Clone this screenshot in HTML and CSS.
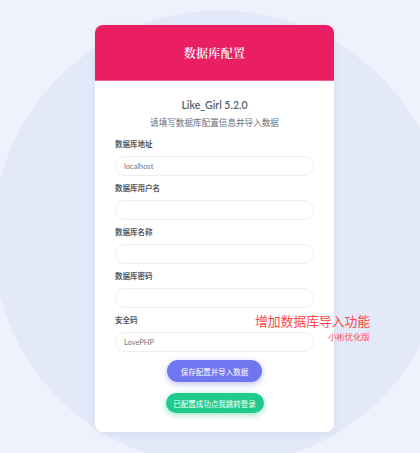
FILE: index.html
```
<!DOCTYPE html>
<html lang="zh-CN">
<head>
<meta charset="utf-8">
<title>数据库配置</title>
<link rel="stylesheet" href="styles.css">
</head>
<body>
<div class="card">
  <div class="card-head">数据库配置</div>
  <form class="card-body">
    <div class="app-name">Like_Girl 5.2.0</div>
    <div class="app-desc">请填写数据库配置信息并导入数据</div>
    <label class="field-label">数据库地址</label>
    <input class="field-input" type="text" placeholder="localhost">
    <label class="field-label">数据库用户名</label>
    <input class="field-input" type="text">
    <label class="field-label">数据库名称</label>
    <input class="field-input" type="text">
    <label class="field-label">数据库密码</label>
    <input class="field-input" type="password">
    <label class="field-label">安全码</label>
    <input class="field-input" type="text" placeholder="LovePHP">
    <div class="actions">
      <button type="button" class="btn btn-save">保存配置并导入数据</button>
      <button type="button" class="btn btn-login">已配置成功点我跳转登录</button>
    </div>
  </form>
</div>
<div class="note">
  <div class="note-main">增加数据库导入功能</div>
  <div class="note-sub">小彬优化版</div>
</div>
</body>
</html>
```
FILE: styles.css
```
html, body {
  margin: 0;
  padding: 0;
}
html {
  overflow: hidden;
}
body {
  width: 420px;
  height: 453px;
  overflow: hidden;
  position: relative;
  background: radial-gradient(circle 228px at 220px 238px, #e3e9f9 99.6%, #eef2fc 100%) no-repeat, #eef2fc;
  font-family: "Lato", "Noto Sans CJK SC", sans-serif;
}
.card {
  width: 239px;
  margin: 25px 0 0 95px;
  background: #fff;
  border-radius: 8px;
  overflow: hidden;
  box-shadow: 0 2px 6px rgba(120, 140, 200, 0.12);
}
.card-head {
  height: 56px;
  background: #e91e63;
  color: #fff;
  display: flex;
  align-items: center;
  justify-content: center;
  font-family: "Noto Serif CJK SC", "Noto Sans CJK SC", serif;
  font-size: 12px;
  font-weight: 600;
  letter-spacing: 0.3px;
  border-bottom: 1px solid #f06292;
  box-sizing: border-box;
}
.card-body {
  display: flex;
  flex-direction: column;
  padding: 16px 20px 19px;
  margin: 0;
}
.app-name {
  text-align: center;
  font-size: 10.5px;
  line-height: 16px;
  font-weight: 600;
  color: #5a606c;
}
.app-desc {
  text-align: center;
  font-size: 8.6px;
  line-height: 14px;
  margin-top: 3px;
  color: #6b6f78;
}
.field-label {
  font-size: 7.5px;
  line-height: 12px;
  font-weight: 600;
  color: #555a66;
  margin-top: 7px;
}
.app-desc + .field-label {
  margin-top: 9px;
}
.field-input {
  margin-top: 5px;
  height: 20px;
  box-sizing: border-box;
  border: 1px solid #eeeeee;
  border-radius: 10px;
  padding: 0 8px;
  font-family: "Lato", sans-serif;
  font-size: 7.5px;
  color: #555;
  background: #fff;
  outline: none;
}
.field-input::placeholder {
  color: #757575;
}
.actions {
  display: flex;
  flex-direction: column;
  align-items: center;
  margin-top: 8px;
  gap: 11px;
}
.btn {
  border: none;
  color: #fff;
  font-family: "Noto Sans CJK SC", sans-serif;
  font-size: 7.5px;
  padding: 0;
  cursor: pointer;
}
.btn-save {
  width: 95px;
  height: 22px;
  border-radius: 11px;
  background: #7076ef;
  box-shadow: 0 2px 6px rgba(112, 118, 239, 0.45);
}
.btn-login {
  width: 98px;
  height: 20px;
  border-radius: 10px;
  background: #1ecb8c;
  box-shadow: 0 2px 6px rgba(30, 203, 140, 0.45);
}
.note {
  position: absolute;
  left: 255px;
  top: 312px;
  width: 115px;
  text-align: right;
  font-family: "Noto Sans CJK SC", sans-serif;
}
.note-main {
  font-size: 12.8px;
  line-height: 17px;
  color: #ff4545;
  white-space: nowrap;
}
.note-sub {
  font-size: 8.4px;
  line-height: 12px;
  color: #ff5252;
  margin-top: 1px;
}
```
